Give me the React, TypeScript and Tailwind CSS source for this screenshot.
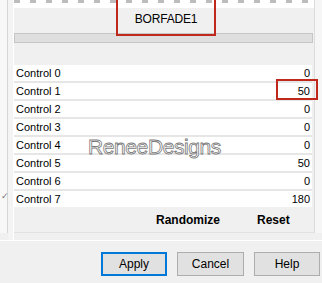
export default function App() {
  const values = ["0", "50", "0", "0", "0", "50", "0", "180"];
  return (
    <div className="relative w-[322px] h-[283px] overflow-hidden bg-[#f0f0f0] font-['Liberation_Sans',Arial,sans-serif] text-black">
      <div className="flex h-[240px]">
        <div className="relative w-[8px] h-[233px] bg-[#f8f8f8] border-r border-[#d6d6d6]">
          <span className="absolute left-[1px] top-[192px] text-[9px] leading-none text-[#777]">✓</span>
        </div>
        <div className="w-[5px] bg-[#f4f4f4]" />
        <div className="w-px bg-white" />
        <div className="w-[300px] h-[233px] flex flex-col border-b border-[#e2e2e2]">
          <div className="h-[8px] bg-white">
            <div className="h-[3px] mr-[3px] bg-[repeating-linear-gradient(90deg,#bdbdbd_0_6px,transparent_6px_16px)]" />
          </div>
          <div className="h-[25px]" />
          <div className="h-[10px] mr-[1px] border border-[#c6c6c6] bg-[#dfdfdf]" />
          <div className="h-[22px]" />
          <div className="flex flex-col gap-[2px] bg-[#e6e6e6] mr-[2px]">
            {values.map((v, i) => (
              <div key={i} className="h-[16px] bg-white flex items-center justify-between pl-[2px] pr-[2px] text-[11px] leading-none">
                <span>Control {i}</span>
                <span>{v}</span>
              </div>
            ))}
          </div>
          <div className="flex-1 flex items-center text-[12px] font-bold leading-none pt-[1px]">
            <span className="ml-[142px]">Randomize</span>
            <span className="ml-[37px]">Reset</span>
          </div>
        </div>
        <div className="w-px h-[233px] bg-[#dcdcdc]" />
        <div className="flex-1 h-[233px] bg-[#f6f6f6]" />
      </div>
      <div className="h-px bg-white" />
      <div className="flex justify-end gap-[10px] pt-[11px] pr-[2px] text-[12px]">
        <div className="w-[66px] h-[24px] flex items-center justify-center bg-[#e1e1e1] border-2 border-[#0078d7]">Apply</div>
        <div className="w-[67px] h-[24px] flex items-center justify-center bg-[#e1e1e1] border border-[#adadad]">Cancel</div>
        <div className="w-[66px] h-[24px] flex items-center justify-center bg-[#e1e1e1] border border-[#adadad]">Help</div>
      </div>

      <div className="absolute left-[116px] top-[-3px] w-[100px] h-[39px] border-2 border-[#c0281c] flex items-center justify-center pt-[4px]">
        <span className="text-[12px] tracking-[-0.2px] leading-none">BORFADE1</span>
      </div>
      <div className="absolute left-[276px] top-[79px] w-[42px] h-[21px] border-2 border-[#c0281c]" />
      <div className="absolute left-[88px] top-[136px] text-[21px] leading-none text-white tracking-[-0.4px] [-webkit-text-stroke:0.8px_#7a7a7a]">
        ReneeDesigns
      </div>
    </div>
  );
}
